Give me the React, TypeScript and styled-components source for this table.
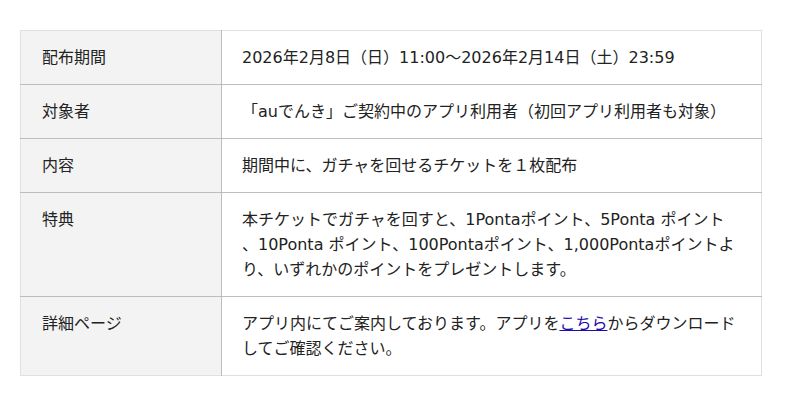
import React from "react";
import styled, { createGlobalStyle } from "styled-components";

const Global = createGlobalStyle`
  html, body { margin: 0; padding: 0; background: #fff; }
  body { font-family: "DejaVu Sans", "Noto Sans CJK JP", sans-serif; color: #222; }
`;

const Wrap = styled.div`
  padding: 30px 38px 30px 20px;
`;

const Table = styled.table`
  width: 742px;
  border-collapse: collapse;
  border: 1px solid #e0e0e0;
  font-size: 16px;
  line-height: 25px;
`;

const Row = styled.tr`
  border-bottom: 1px solid #bdbdbd;
  &:last-child { border-bottom: 1px solid #e0e0e0; }
`;

const Head = styled.th`
  width: 159px;
  background: #f3f3f3;
  text-align: left;
  font-weight: normal;
  vertical-align: top;
  padding: 14px 20px 14px 21px;
  border-right: 1px solid #bdbdbd;
`;

const Cell = styled.td`
  vertical-align: top;
  padding: 14px 20px;
`;

const Link = styled.a`
  color: #1a0dab;
  text-decoration: underline;
`;

const rows: { h: string; v: React.ReactNode }[] = [
  { h: "配布期間", v: "2026年2月8日（日）11:00〜2026年2月14日（土）23:59" },
  { h: "対象者", v: "「auでんき」ご契約中のアプリ利用者（初回アプリ利用者も対象）" },
  { h: "内容", v: "期間中に、ガチャを回せるチケットを１枚配布" },
  {
    h: "特典",
    v: (
      <>
        本チケットでガチャを回すと、1Pontaポイント、5Ponta ポイント
        <br />
        、10Ponta ポイント、100Pontaポイント、1,000Pontaポイントよ
        <br />
        り、いずれかのポイントをプレゼントします。
      </>
    ),
  },
  {
    h: "詳細ページ",
    v: (
      <>
        アプリ内にてご案内しております。アプリを<Link href="#">こちら</Link>からダウンロード
        <br />
        してご確認ください。
      </>
    ),
  },
];

export default function App() {
  return (
    <>
      <Global />
      <Wrap>
        <Table>
          <tbody>
            {rows.map((r) => (
              <Row key={r.h}>
                <Head>{r.h}</Head>
                <Cell>{r.v}</Cell>
              </Row>
            ))}
          </tbody>
        </Table>
      </Wrap>
    </>
  );
}
